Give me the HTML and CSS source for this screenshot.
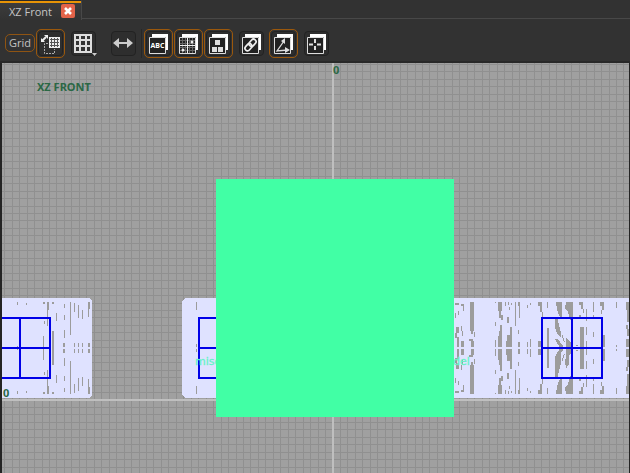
FILE: index.html
```html
<!DOCTYPE html>
<html lang="en">
<head>
<meta charset="utf-8">
<title>XZ Front</title>
<link rel="stylesheet" href="styles.css">
</head>
<body>
<header class="tabs">
  <div class="tab">
    <span class="tab-title">XZ Front</span>
    <button class="close" type="button" aria-label="Close tab"><svg width="14" height="14" viewBox="0 0 14 14"><path d="M4 4l6 6M10 4l-6 6" stroke="#fff" stroke-width="2.600"/></svg></button>
  </div>
</header>
<nav class="toolbar" aria-label="View tools">
  <div class="group">
    <button class="text-tool" type="button">Grid</button>
    <button class="tool on" type="button" aria-label="Snap to grid"><span class="face"><svg width="23" height="23" viewBox="0 0 23 23"><path d="M10 5h11v11H10z" fill="#eee"/><path d="M12.500 6v9M15.500 6v9M18.500 6v9M11 7.500h9M11 10.500h9M11 13.500h9" stroke="#555"/><path d="M3 9l4-4" stroke="#eee" stroke-width="2"/><path d="M2 10V6l4 4zM5 3h4v4z" fill="#eee"/><path d="M9 11.500H5.500v10h10V17" fill="none" stroke="#aaa" stroke-dasharray="2 1"/></svg></span></button>
    <button class="tool" type="button" aria-label="Grid size"><span class="face"><svg width="23" height="23" viewBox="0 0 23 23"><path d="M2 2h18v19H2z" fill="#ddd"/><path d="M4 4h3v3H4zm5 0h4v3H9zm6 0h3v3h-3zM4 9h3v4H4zm5 0h4v4H9zm6 0h3v4h-3zM4 15h3v4H4zm5 0h4v4H9zm6 0h3v4h-3z" fill="#333"/></svg></span><svg class="caret" width="5" height="3" viewBox="0 0 5 3"><path d="M0 0h5L2.500 3z" fill="#ccc"/></svg></button>
  </div>
  <div class="group">
    <button class="tool" type="button" aria-label="Flip view"><span class="face"><svg width="23" height="23" viewBox="0 0 23 23"><path d="M1 11l6-5v4h8V6l6 5-6 5v-4H7v4z" fill="#ccc"/></svg></span></button>
  </div>
  <div class="group divided">
    <button class="tool on" type="button" aria-label="Show names"><span class="face"><svg width="23" height="23" viewBox="0 0 23 23"><path d="M5 2h16v16h-2V5H5z" fill="#fff"/><path d="M2.500 5.500h16v16h-16z" fill="#222" stroke="#ddd"/><text class="abc" x="10.500" y="16" text-anchor="middle">ABC</text></svg></span></button>
    <button class="tool on" type="button" aria-label="Show textures"><span class="face"><svg width="23" height="23" viewBox="0 0 23 23"><path d="M5 2h16v16h-2V5H5z" fill="#fff"/><path d="M2.500 5.500h16v16h-16z" fill="#222" stroke="#ddd"/><path d="M5.500 6v15M8.500 6v15M12.500 6v15M15.500 6v15M3 8.500h15M3 11.500h15M3 15.500h15M3 18.500h15" stroke="#666"/><path d="M10.500 6v15M3 13.500h15" stroke="#eee"/><circle cx="15" cy="10" r="1.500" fill="#eee"/><circle cx="6" cy="18" r="1.500" fill="#eee"/></svg></span></button>
    <button class="tool on" type="button" aria-label="Show blocks"><span class="face"><svg width="23" height="23" viewBox="0 0 23 23"><path d="M5 2h16v16h-2V5H5z" fill="#fff"/><path d="M2.500 5.500h16v16h-16z" fill="#222" stroke="#ddd"/><path d="M8 8h5v5H8zM5 15h5v5H5zm6 0h5v5h-5z" fill="#ddd"/></svg></span></button>
    <button class="tool" type="button" aria-label="Show links"><span class="face"><svg width="23" height="23" viewBox="0 0 23 23"><path d="M5 2h16v16h-2V5H5z" fill="#fff"/><path d="M2.500 5.500h16v16h-16z" fill="#222" stroke="#ddd"/><g transform="rotate(-48 10.500 13)" fill="none" stroke="#eee" stroke-width="1.700"><rect x="3.500" y="10.500" width="8" height="5" rx="2.500"/><rect x="9.500" y="10.500" width="8" height="5" rx="2.500"/></g></svg></span></button>
    <button class="tool on" type="button" aria-label="Show angles"><span class="face"><svg width="23" height="23" viewBox="0 0 23 23"><path d="M5 2h16v16h-2V5H5z" fill="#fff"/><path d="M2.500 5.500h16v16h-16z" fill="#222" stroke="#ddd"/><path d="M12 9L5 19l11-1" fill="none" stroke="#ddd" stroke-width="1.300"/><path d="M13 6v6l-4-3zM13 15l5 3-5 3z" fill="#ddd"/></svg></span></button>
    <button class="tool" type="button" aria-label="Show center"><span class="face"><svg width="23" height="23" viewBox="0 0 23 23"><path d="M5 2h16v16h-2V5H5z" fill="#fff"/><path d="M2.500 5.500h16v16h-16z" fill="#222" stroke="#ddd"/><path d="M10 7v4M10 14v4M4 12.500h4M12 12.500h4" stroke="#ddd" stroke-width="2"/></svg></span></button>
  </div>
</nav>
<main class="viewport">
  <svg class="scene" width="100%" height="100%" role="img" aria-label="Front view of the model">
    <g id="grid" class="grid" shape-rendering="crispEdges"></g>
    <g shape-rendering="crispEdges">
      <path class="axis" d="M330 0h2v2000h-2zM0 336h4000v2H0z"/>
      <path class="slab" d="M0 235h87l3 3v94l-3 3H0zM183 235h4000v100H183l-3-3v-94z"/>
      <g id="gaps" class="gap"></g>
      <path class="frame" d="M-12 255h60v60h-60zM18 255v60M-12 285h60M197 255h60v60h-60zM197 285h60M540 255h60v60h-60zM570 255v60M540 285h60"/>
    </g>
    <text class="object-name" x="193" y="302">misc</text>
    <text class="object-name" x="451" y="302">del</text>
    <path class="block" d="M214 116h238v238H214z"/>
    <text class="label" x="35" y="28">XZ FRONT</text>
    <text class="label" x="331" y="11">0</text>
    <text class="label" x="1" y="334">0</text>
  </svg>
</main>
<script src="scene.js"></script>
</body>
</html>
```
FILE: styles.css
```css
* { box-sizing: border-box; }
html, body { height: 100%; }
body {
  margin: 0;
  display: flex;
  flex-direction: column;
  background: #323232;
  color: #c4c4c4;
  font: 11px/16px "Open Sans", sans-serif;
  overflow: hidden;
}
button { padding: 0; border: 0; background: none; color: inherit; font: inherit; }
svg { display: block; }
.tabs {
  display: flex;
  flex: none;
  height: 20px;
  background: linear-gradient(#323232 18px, #484848 18px, #484848 19px, #323232 19px);
}
.tab {
  display: flex;
  align-items: flex-start;
  gap: 9px;
  padding: 3px 6px 0 9px;
  border-top: 1px solid #2a2a2a;
  border-right: 1px solid #484848;
  background: linear-gradient(#e89406 2px, #3c3c3c 2px, #333 19px);
}
.close { width: 14px; height: 14px; border-radius: 2px; background: #e36349; }
.toolbar {
  display: flex;
  flex: none;
  align-items: center;
  height: 43px;
  padding: 5px 5px 0;
  border-bottom: 2px solid #292929;
}
.group { display: flex; align-items: center; gap: 1px; }
.group + .group { margin-left: 6px; }
.group.divided { margin-left: 1px; padding-left: 2px; border-left: 1px solid #272727; }
.text-tool {
  width: 30px;
  height: 18px;
  border: 1px solid #8f5413;
  border-radius: 5px;
  line-height: 16px;
}
.tool { position: relative; margin: 0 4px 0 5px; }
.tool.on { margin: 0; padding: 1px; border: 1px solid #9b580c; border-radius: 5px; }
.face {
  display: block;
  width: 25px;
  height: 25px;
  border: 1px solid #222;
  border-radius: 4px;
  background: #2e2e2e;
}
.caret { position: absolute; right: -1px; bottom: 0; }
.abc { fill: #fff; font: bold 7px "Open Sans", sans-serif; }
.viewport {
  flex: 1;
  min-height: 0;
  padding: 0 1px 0 2px;
  background: #242424;
}
.scene { background: #a0a0a0; }
.grid { stroke: #909090; }
.axis { fill: #bfbfbf; }
.slab { fill: #dfe2ff; }
.gap { fill: #9c9c9c; }
.frame { fill: none; stroke: #0000e8; stroke-width: 2; }
.block { fill: #41ffa5; }
.object-name { fill: #66f2c8; stroke: #66f2c8; stroke-width: 0.3px; font: 11px "DejaVu Sans", sans-serif; }
.label { fill: #2b6845; font: 700 11px "Noto Sans", sans-serif; }
```
FILE: scene.js
```js
const NS = "http://www.w3.org/2000/svg";
const grid = document.getElementById("grid");
const gaps = document.getElementById("gaps");
const add = (parent, d, transform) => {
  const path = document.createElementNS(NS, "path");
  path.setAttribute("d", d);
  if (transform) path.setAttribute("transform", transform);
  parent.append(path);
};

// Grid lines spread from the axes at a constant world step.
const step = 7.46;
let lines = "";
for (let i = -45; i < 400; i++) {
  lines += `M${Math.floor(331 + i * step) + 0.5} 0v2000`;
  lines += `M0 ${Math.floor(337 + i * step) + 0.5}h4000`;
}
add(grid, lines);

// Openings in the upper half of the slab: x, top, width, height.
const middle = 285;
const openings = [
  [15,239,1,3],[24,240,1,2],[15,283,1,2],[41,239,2,2],[45,239,2,8],[45,247,1,16],[50,239,2,2],[50,268,2,17],[41,273,1,12],[42,258,1,3],
  [54,250,1,8],[62,241,1,4],[62,252,1,5],[62,267,1,8],[61,280,2,4],[68,239,1,33],[72,240,1,9],[72,280,1,4],
  [76,242,1,13],[76,280,1,4],[80,247,1,9],[80,280,1,4],[86,239,2,7],[86,246,1,8],[86,280,2,4],
  [194,239,1,8],[194,281,1,3],
  [453,240,4,2],[453,250,1,5],[456,248,1,4],[454,264,3,6],[453,270,2,5],[455,274,2,10],
  [459,241,3,2],[461,243,1,5],[459,263,1,5],[460,268,1,5],[459,278,3,6],
  [468,239,4,29],[469,268,2,3],[472,269,1,5],[467,276,4,2],[469,278,3,6],
  [493,239,1,1],[493,259,1,4],[493,277,1,7],[496,239,4,9],[497,248,2,7],[499,252,2,5],[498,262,2,6],[497,268,3,5],[496,273,4,11],
  [503,239,1,4],[506,239,1,3],[507,244,1,3],[509,240,1,2],[505,254,2,6],[508,264,2,8],[505,272,5,12],[504,278,1,6],
  [513,239,1,24],[516,239,2,4],[517,243,1,12],[516,267,1,4],[516,279,2,5],[525,242,1,3],[528,240,1,2],[525,279,1,5],[528,276,1,8],
  [536,239,4,4],[538,243,2,6],[540,249,1,5],[536,278,3,6],[539,270,1,7],[545,239,1,6],[545,265,2,19],
  [577,239,4,3],[579,242,2,4],[581,246,1,4],[577,252,2,3],[578,264,4,20],[584,246,1,12],[584,264,1,8],[584,278,1,6],
  [591,239,1,10],[591,252,1,4],[591,269,1,5],[598,239,4,4],[600,243,2,4],[599,247,1,4],[599,265,1,8],[601,272,2,12],
  [614,239,1,6],[614,282,1,2],[624,239,3,8],[625,247,2,12],[624,262,2,4],[625,266,2,7],[624,276,3,8]
];
let d = openings.map(([x, y, w, h]) => `M${x} ${y}h${w}v${h}h-${w}z`).join("");
// Wide openings with slanted edges around the right window.
d += "M554 239h6v15h-2l-3-7zM564 239h7v19h-2l-3-9-3-4zM553 254h2l4 16v5l-4-5-2-6z";
d += "M553 276h3l5 7v2h-3zM560 271l3 8-2-1zM564 274l6 7v3h-6zM574 282h2v1h-2z";

// The lower half mirrors the upper one.
add(gaps, d);
add(gaps, d, `matrix(1 0 0 -1 0 ${2 * middle})`);
// Diagonal braces cross the wide openings below the middle.
add(gaps, "M553 293l6-4v5l-4 13-2 4zM563 297l4-6v10l-3 5z");
```
